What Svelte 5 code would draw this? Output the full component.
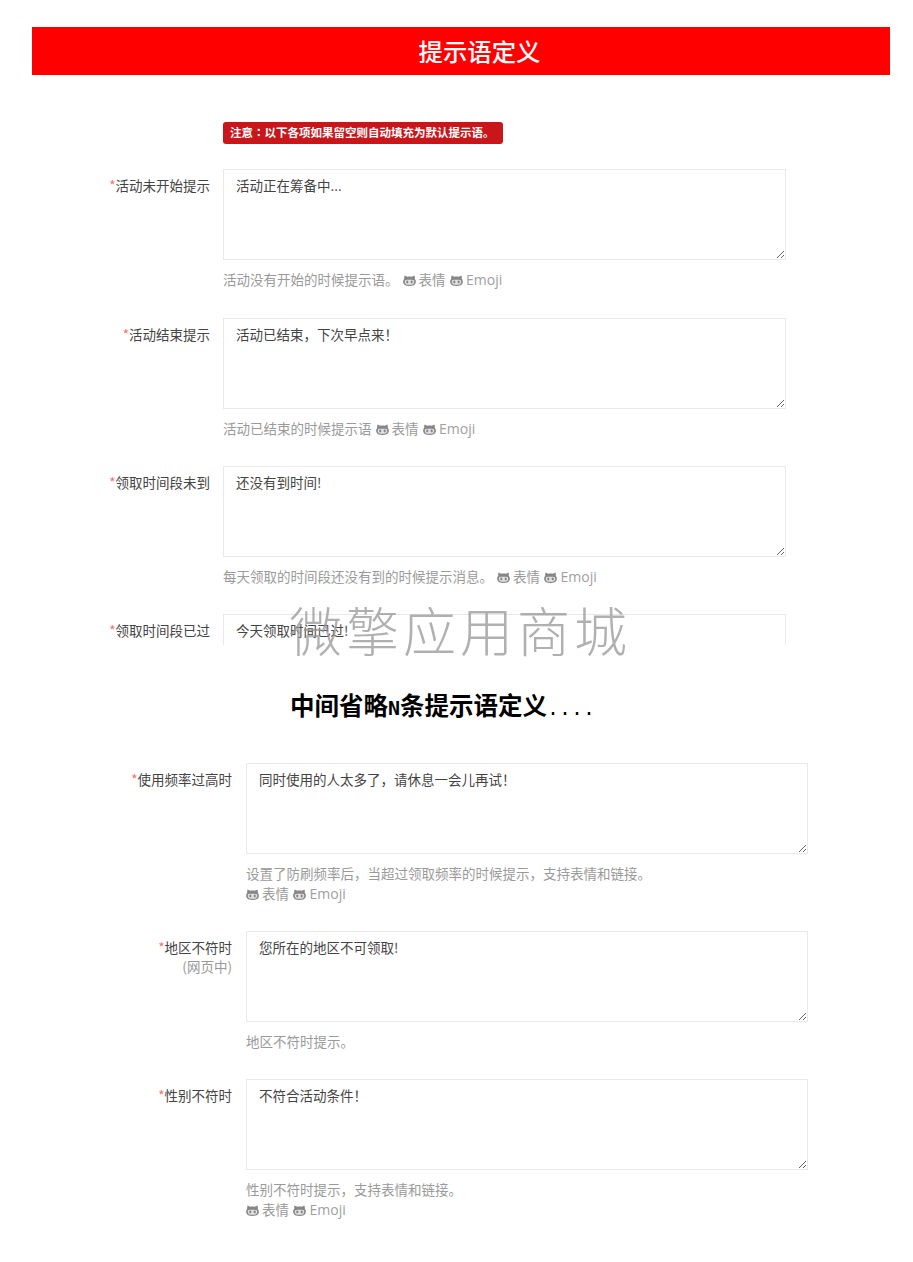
<script>
  const topRows = [
    { label: '活动未开始提示', value: '活动正在筹备中...', help: '活动没有开始的时候提示语。' },
    { label: '活动结束提示', value: '活动已结束，下次早点来！', help: '活动已结束的时候提示语' },
    { label: '领取时间段未到', value: '还没有到时间!', help: '每天领取的时间段还没有到的时候提示消息。' },
    { label: '领取时间段已过', value: '今天领取时间已过!', help: '' }
  ];
  const bottomRows = [
    { label: '使用频率过高时', value: '同时使用的人太多了，请休息一会儿再试！', help: '设置了防刷频率后，当超过领取频率的时候提示，支持表情和链接。', wrap: true },
    { label: '地区不符时', sub: '(网页中)', value: '您所在的地区不可领取!', help: '地区不符时提示。', noEmoji: true },
    { label: '性别不符时', value: '不符合活动条件！', help: '性别不符时提示，支持表情和链接。', wrap: true }
  ];
</script>

{#snippet cat()}
  <svg class="cat" viewBox="0 0 13 11" aria-hidden="true">
    <path class="head" d="M1.6 .5 L4.2 1.7 C5.5 1.5 7.5 1.5 8.8 1.7 L11.4 .5 C11.8 1.5 11.9 2.7 11.8 3.7 C12.7 4.8 13 6.2 12.8 7.6 C12.4 10.2 10 10.9 6.5 10.9 C3 10.9 .6 10.2 .2 7.6 C0 6.2 .3 4.8 1.2 3.7 C1.1 2.7 1.2 1.5 1.6 .5 Z" />
    <path class="face" d="M2.6 5 C4.5 4.5 8.5 4.5 10.4 5 C11.6 5.4 11.6 8.8 9.6 9.4 C7.8 9.8 5.2 9.8 3.4 9.4 C1.4 8.8 1.4 5.4 2.6 5 Z" />
    <ellipse class="head" cx="4.3" cy="7" rx="1.1" ry="1.4" />
    <ellipse class="head" cx="8.7" cy="7" rx="1.1" ry="1.4" />
  </svg>
{/snippet}

{#snippet emoji()}
  <span class="tools">{@render cat()}<span>表情</span>{@render cat()}<span class="en">Emoji</span></span>
{/snippet}

{#snippet row(r)}
  <div class="row">
    <div class="label">
      <div><span class="req">*</span>{r.label}</div>
      {#if r.sub}<div class="sub">{r.sub}</div>{/if}
    </div>
    <div class="field">
      <textarea readonly value={r.value}></textarea>
      {#if r.help}
        <div class="help">
          {r.help}{#if r.wrap}<br />{:else if !r.noEmoji}<span class="gap"></span>{/if}{#if !r.noEmoji}{@render emoji()}{/if}
        </div>
      {/if}
    </div>
  </div>
{/snippet}

<main class="page">
  <h1 class="banner">提示语定义</h1>

  <section class="top">
    <div class="clip">
      <div class="row notice-row">
        <div class="label"></div>
        <div class="notice">注意<span class="colon">：</span>以下各项如果留空则自动填充为默认提示语。</div>
      </div>
      {#each topRows as r}
        {@render row(r)}
      {/each}
    </div>
    <div class="watermark">微擎应用商城</div>
  </section>

  <h2 class="middle">中间省略<span class="mono">N</span>条提示语定义<span class="dots">....</span></h2>

  <section class="bottom">
    {#each bottomRows as r}
      {@render row(r)}
    {/each}
  </section>
</main>

<style>
  :global(body) {
    margin: 0;
    background: #fff;
  }
  .page {
    box-sizing: border-box;
    width: 913px;
    height: 1262px;
    padding-top: 27px;
    font-family: "Noto Sans CJK SC", "Liberation Sans", sans-serif;
    font-size: 13.5px;
    line-height: 20px;
    color: #444;
    overflow: hidden;
  }
  .banner {
    margin: 0 23px 0 32px;
    height: 48px;
    background: #ff0000;
    color: #fff;
    font-size: 24.4px;
    font-weight: 500;
    line-height: 48px;
    text-align: center;
    padding-left: 37px;
    box-sizing: border-box;
  }
  .top {
    position: relative;
    height: 570px;
    --label-w: 178px;
    --gap: 13px;
    --field-w: 563px;
  }
  .clip {
    height: 570px;
    overflow: hidden;
    padding-top: 47px;
    box-sizing: border-box;
  }
  .bottom {
    --label-w: 200px;
    --gap: 14px;
    --field-w: 562px;
  }
  .row {
    display: flex;
    gap: var(--gap);
    padding-left: 32px;
    margin-bottom: 28.5px;
  }
  .top .row:nth-child(2) {
    margin-bottom: 29.5px;
  }
  .top .notice-row {
    margin-bottom: 25px;
  }
  .label {
    flex: none;
    width: var(--label-w);
    padding-top: 5.5px;
    text-align: right;
    box-sizing: border-box;
  }
  .notice-row .label {
    padding-top: 0;
  }
  .req {
    color: #f1706a;
  }
  .sub {
    color: #999;
    margin-top: -1px;
  }
  .field {
    flex: none;
    width: var(--field-w);
  }
  textarea {
    display: block;
    box-sizing: border-box;
    width: 100%;
    height: 91px;
    margin: 0 0 8.5px;
    padding: 4.5px 12px 6px;
    border: 1px solid #e8e9ea;
    border-radius: 0;
    outline: none;
    background: #fff;
    color: #444;
    font: inherit;
    resize: vertical;
  }
  .help {
    color: #9a9a9a;
    white-space: nowrap;
  }
  .gap {
    display: inline-block;
    width: 4px;
  }
  .tools {
    display: inline-flex;
    align-items: center;
    gap: 3px;
    vertical-align: top;
    height: 20px;
  }
  .tools span + :global(svg) {
    margin-left: 1px;
  }
  .cat {
    width: 13px;
    height: 11px;
    margin-top: 3px;
  }
  .head {
    fill: #868686;
  }
  .face {
    fill: #e2e2e2;
  }
  .en {
    font-family: "Open Sans", "Liberation Sans", sans-serif;
    font-size: 14px;
    color: #a0a0a0;
    padding-top: 2px;
    padding-left: 0.5px;
  }
  .notice {
    box-sizing: border-box;
    width: 280px;
    height: 22px;
    padding-left: 7px;
    background: #c9161b;
    border-radius: 3px;
    color: #fff;
    font-size: 11.5px;
    font-weight: 700;
    line-height: 21px;
    white-space: nowrap;
  }
  .colon {
    font-family: "Noto Sans CJK TC", sans-serif;
  }
  .watermark {
    position: absolute;
    left: 289px;
    top: 517px;
    color: rgba(150, 150, 150, 0.75);
    font-size: 53px;
    letter-spacing: 4px;
    line-height: 74px;
    font-weight: 300;
    white-space: nowrap;
  }
  .middle {
    margin: 0;
    height: 118px;
    padding: 46px 0 0 290px;
    box-sizing: border-box;
    color: #000;
    font-size: 24.5px;
    font-weight: 700;
    line-height: 27px;
    white-space: nowrap;
  }
  .mono {
    font-family: "DejaVu Sans Mono", monospace;
    font-size: 20px;
  }
  .dots {
    font-family: "Liberation Mono", monospace;
    font-size: 20px;
    font-weight: 400;
  }
</style>
